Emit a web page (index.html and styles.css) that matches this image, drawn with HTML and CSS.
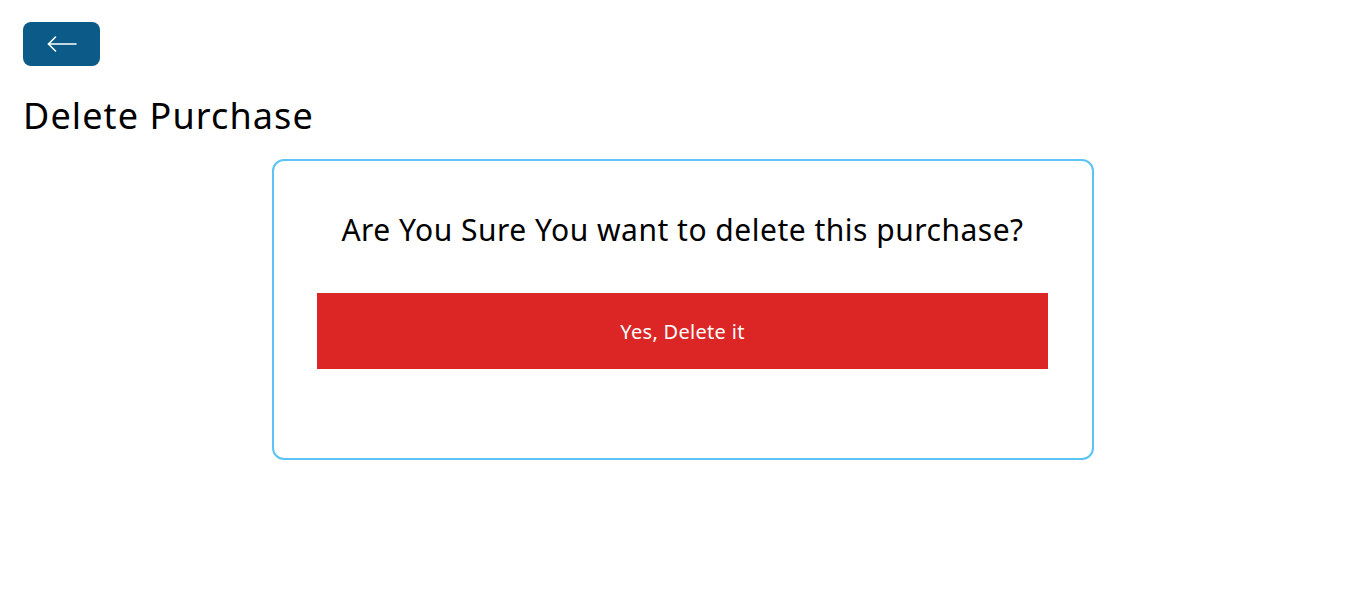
FILE: index.html
```html
<!DOCTYPE html>
<html lang="en">
<head>
<meta charset="utf-8">
<title>Delete Purchase</title>
<link rel="stylesheet" href="styles.css">
</head>
<body>
<div class="page">
  <button class="back-btn" type="button" aria-label="Back">
    <svg width="30" height="16" viewBox="0 0 30 16" fill="none" stroke="#ffffff" stroke-width="1.6" stroke-linecap="round" stroke-linejoin="round">
      <path d="M1.5 8 H29"/>
      <path d="M8.5 1 L1.5 8 L8.5 15"/>
    </svg>
  </button>
  <h1 class="title">Delete Purchase</h1>
  <div class="card">
    <h3 class="question">Are You Sure You want to delete this purchase?</h3>
    <button class="delete-btn" type="button">Yes, Delete it</button>
  </div>
</div>
</body>
</html>
```

FILE: styles.css
```css
* { box-sizing: border-box; }
html, body { margin: 0; padding: 0; background: #ffffff; }
body {
  font-family: "Noto Sans", "Open Sans", sans-serif;
  color: #000000;
}
.page {
  padding: 22px 23px;
  display: flex;
  flex-direction: column;
}
.back-btn {
  width: 77px;
  height: 44px;
  border: none;
  border-radius: 8px;
  background: #0b5a88;
  display: flex;
  align-items: center;
  justify-content: center;
  padding: 0;
  cursor: pointer;
}
.title {
  margin: 27px 0 0 0;
  font-size: 36px;
  font-weight: 400;
  line-height: 46px;
  letter-spacing: 1.1px;
}
.card {
  align-self: center;
  width: 822px;
  margin-top: 20px;
  border: 2px solid #5bc3f5;
  border-radius: 12px;
  padding: 49px 44px 89px;
  display: flex;
  flex-direction: column;
  align-items: center;
}
.question {
  margin: 0;
  font-size: 30px;
  font-weight: 400;
  line-height: 40px;
  letter-spacing: 0.5px;
}
.delete-btn {
  margin-top: 43px;
  width: 731px;
  height: 76px;
  border: none;
  background: #dc2626;
  color: #ffffff;
  font-family: inherit;
  font-size: 20px;
  letter-spacing: 0.3px;
  padding: 0;
  cursor: pointer;
}
```
